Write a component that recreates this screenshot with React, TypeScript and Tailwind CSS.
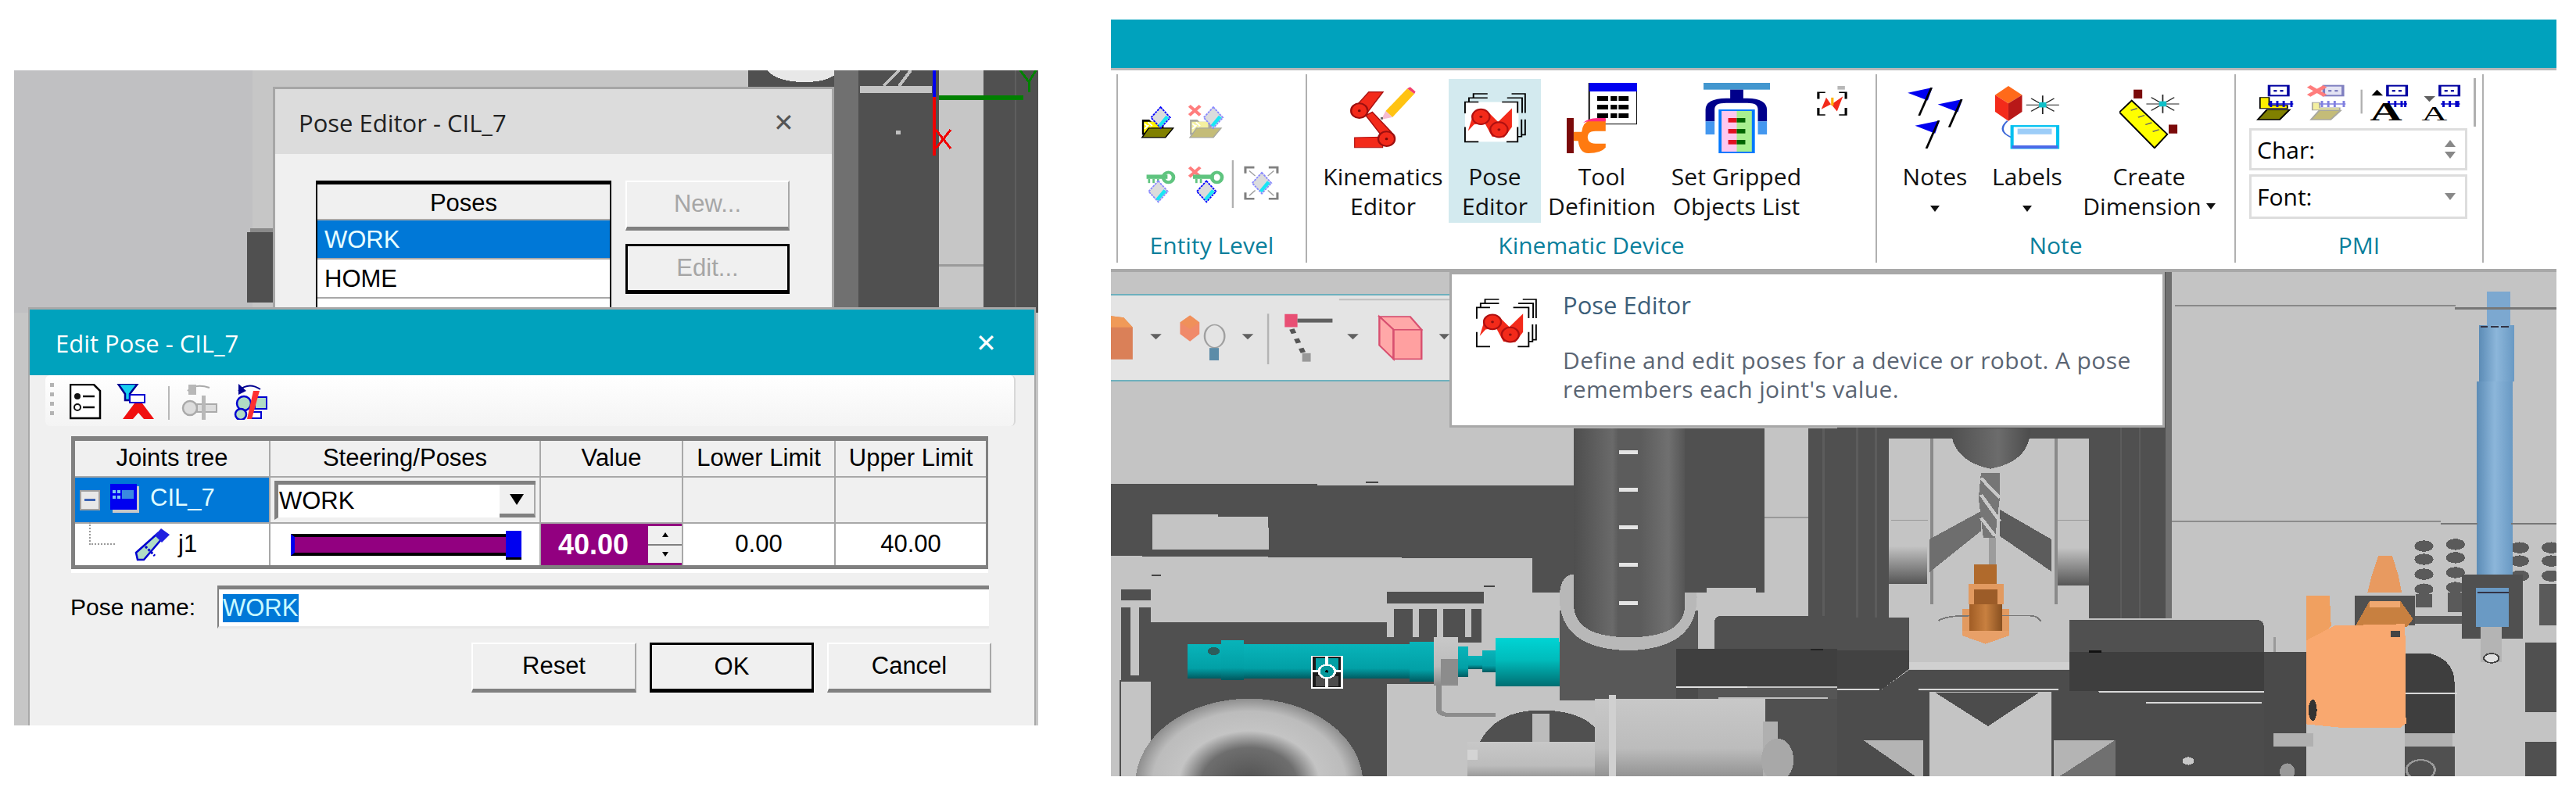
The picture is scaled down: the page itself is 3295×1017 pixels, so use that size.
import React from "react";

const sans = "font-['Liberation_Sans',Arial,sans-serif]";
const open = "font-['Open_Sans',sans-serif]";

function Diamond({ x, y, faded }: { x: number; y: number; faded?: boolean }) {
  const c = faded ? "#8888ff" : "#0000ff";
  return (
    <g>
      <polygon points={`${x},${y - 40} ${x + 32},${y} ${x},${y + 40} ${x - 32},${y}`} fill="#dcdcdc" stroke={c} strokeWidth="5" strokeDasharray="8 3" />
      <polygon points={`${x + 28},${y} ${x},${y + 36} ${x - 8},${y + 28} ${x + 18},${y - 8}`} fill="#19e6f5" />
    </g>
  );
}

function Folder({ x, faded }: { x: number; faded?: boolean }) {
  return (
    <g>
      <path d={`M${x},190 h24 l8,8 h40 v50 h-72 z`} fill={faded ? "#a8a8a0" : "#000"} />
      <rect x={x + 6} y={198} width={55} height={42} fill={faded ? "#f4f0a0" : "#fff000"} />
      <path d={`M${x + 8},205 l10,10 M${x + 20},200 l14,14 M${x + 8},225 l14,-14 M${x + 30},218 l-10,14`} stroke="#fff" strokeWidth="5" />
      <polygon points={`${x + 22},222 ${x + 104},222 ${x + 78},258 ${x},258`} fill={faded ? "#c4bc78" : "#808000"} stroke={faded ? "#a8a8a0" : "#000"} strokeWidth="4" />
    </g>
  );
}

function Cross({ x, y }: { x: number; y: number }) {
  return <path d={`M${x - 18},${y - 18} L${x + 18},${y + 18} M${x + 18},${y - 18} L${x - 18},${y + 18}`} stroke="#ff7d7d" strokeWidth="11" />;
}

function EntityIcons() {
  return (
    <svg className="block w-[180px] h-[134px]" viewBox="70 130 470 400" preserveAspectRatio="none">
      <Folder x={80} />
      <Diamond x={142} y={182} />
      <Folder x={240} faded />
      <Diamond x={318} y={182} faded />
      <Cross x={256} y={155} />
      <g fill="#5fc47f">
        <rect x="95" y="400" width="70" height="16" />
        <rect x="100" y="416" width="7" height="16" />
        <rect x="115" y="416" width="7" height="16" />
        <rect x="130" y="416" width="7" height="16" />
      </g>
      <ellipse cx="168" cy="410" rx="17" ry="19" fill="none" stroke="#5fc47f" strokeWidth="12" />
      <Diamond x={134} y={464} faded />
      <Cross x={256} y={390} />
      <g fill="#5fc47f">
        <rect x="250" y="400" width="70" height="16" />
        <rect x="258" y="416" width="7" height="16" />
        <rect x="273" y="416" width="7" height="16" />
      </g>
      <ellipse cx="330" cy="410" rx="17" ry="19" fill="none" stroke="#5fc47f" strokeWidth="12" />
      <Diamond x={295} y={464} />
      <rect x="380" y="345" width="6" height="182" fill="#b0b0b0" />
      <path d="M425,395 V372 H455 M532,395 V372 H503 M425,468 V492 H455 M532,468 V492 H503" fill="none" stroke="#808080" strokeWidth="8" />
      <path d="M438,385 L458,405 M520,385 L500,405 M438,480 L458,460 M520,480 L500,460" stroke="#a0a0a0" strokeWidth="4" />
      <Diamond x={480} y={432} faded />
    </svg>
  );
}

function KinematicsIcon() {
  return (
    <svg className="block w-[84px] h-[79px]" viewBox="775 65 222 237" preserveAspectRatio="none">
      <polygon points="790,260 885,258 885,298 790,298" fill="#f32a1a" stroke="#b01010" strokeWidth="3" />
      <polygon points="838,85 886,85 832,165 802,130" fill="#f32a1a" stroke="#a81010" strokeWidth="4" />
      <polygon points="828,175 850,162 915,240 885,258" fill="#f32a1a" stroke="#a81010" strokeWidth="4" />
      <circle cx="806" cy="157" r="28" fill="#f32a1a" stroke="#9c0f0f" strokeWidth="6" />
      <circle cx="806" cy="157" r="5" fill="#7a0a0a" />
      <circle cx="898" cy="265" r="28" fill="#f32a1a" stroke="#9c0f0f" strokeWidth="6" />
      <circle cx="898" cy="265" r="5" fill="#7a0a0a" />
      <polygon points="895,158 968,72 992,92 918,182" fill="#ffc312" />
      <polygon points="968,72 978,66 996,84 992,92" fill="#f2406f" />
      <polygon points="895,158 918,182 880,190" fill="#f5bcd0" />
      <rect x="878" y="182" width="8" height="8" fill="#666" />
    </svg>
  );
}

function PoseIcon({ w = "w-[80px]", h = "h-[65px]" }: { w?: string; h?: string }) {
  return (
    <svg className={`block shrink-0 ${w} ${h}`} viewBox="1155 90 208 197" preserveAspectRatio="none">
      <rect x="1160" y="128" width="178" height="154" fill="#fff" />
      <polygon points="1170,240 1190,165 1240,170 1270,205 1316,152 1316,225 1290,265 1250,262 1225,208 1190,215" fill="#f32a1a" />
      <circle cx="1213" cy="185" r="29" fill="#f32a1a" stroke="#b01010" strokeWidth="6" />
      <circle cx="1213" cy="185" r="5" fill="#901010" />
      <circle cx="1273" cy="235" r="29" fill="#f32a1a" stroke="#b01010" strokeWidth="6" />
      <circle cx="1273" cy="235" r="5" fill="#901010" />
      <path d="M1160,172 V128 H1205 M1173,128 V112 H1235 M1188,112 V96 H1235 M1283,128 H1335 V170 M1300,112 H1350 V170 M1315,96 H1360 V170 M1160,225 V282 H1205 M1298,282 H1335 V225 M1335,262 H1348 V195 M1348,255 H1360 V195" fill="none" stroke="#000" strokeWidth="5" />
    </svg>
  );
}

function ToolIcon() {
  return (
    <svg className="block w-[90px] h-[90px]" viewBox="932 297 141 270" preserveAspectRatio="none">
      <rect x="977" y="297" width="96" height="158" fill="#fff" stroke="#000" strokeWidth="3" />
      <rect x="977" y="297" width="96" height="33" fill="#0000f0" />
      <g fill="#000">
        {[348, 381, 414].map((y) => (
          <g key={y}>
            <rect x="993" y={y} width="22" height="18" />
            <rect x="1020" y={y} width="13" height="18" />
            <rect x="1036" y={y} width="20" height="18" />
          </g>
        ))}
      </g>
      <rect x="932" y="432" width="14" height="135" fill="#7b0a0a" />
      <path d="M946,485 H962 Q965,435 992,435 H1010 V482 H990 Q974,482 974,505 Q974,530 990,530 H1010 V545 Q1000,567 975,567 Q958,567 955,520 H946 Z" fill="#ff7a10" />
      <path d="M965,450 Q975,432 995,432 H1010 V445 H975 Z" fill="#ff2a80" />
    </svg>
  );
}

function GrippedIcon() {
  return (
    <svg className="block w-[85px] h-[90px]" viewBox="1205 297 132 270" preserveAspectRatio="none">
      <rect x="1205" y="297" width="132" height="26" fill="#4397cf" />
      <rect x="1258" y="323" width="26" height="35" fill="#00008b" />
      <path d="M1218,445 V400 Q1218,365 1250,365 H1292 Q1322,365 1322,400 V445" fill="none" stroke="#00008b" strokeWidth="18" />
      <path d="M1218,445 V495 M1322,445 V495" stroke="#4397ef" strokeWidth="18" />
      <rect x="1238" y="402" width="66" height="162" fill="#a8f090" stroke="#0078ff" strokeWidth="6" />
      <rect x="1241" y="405" width="30" height="156" fill="#ffc8f0" />
      {[432, 474, 516].map((y) => (
        <g key={y}>
          <rect x="1254" y={y} width="17" height="17" fill="#e01020" />
          <rect x="1271" y={y} width="17" height="17" fill="#006400" />
        </g>
      ))}
    </svg>
  );
}

function SmallPoseIcon() {
  return (
    <svg className="block w-[39px] h-[38px]" viewBox="1433 300 62 115" preserveAspectRatio="none">
      <rect x="1475" y="300" width="15" height="14" fill="#b8b8b8" />
      <path d="M1436,350 V325 H1450 M1478,325 H1492 V350 M1436,385 V412 H1450 M1478,412 H1492 V385" fill="none" stroke="#000" strokeWidth="5" />
      <polygon points="1442,390 1452,345 1462,372 1486,340 1474,398 1462,370" fill="#f32a1a" />
      <rect x="1462" y="345" width="5" height="30" fill="#ffb000" />
    </svg>
  );
}

function Flag({ x, y }: { x: number; y: number }) {
  return (
    <g>
      <polygon points={`${x},${y + 20} ${x + 54},${y} ${x + 44},${y + 50}`} fill="#0000f0" />
      <path d={`M${x + 52},${y} L${x + 25},${y + 108}`} stroke="#000" strokeWidth="5" />
    </g>
  );
}

function NotesIcon() {
  return (
    <svg className="block w-[73px] h-[78px]" viewBox="100 315 125 235" preserveAspectRatio="none">
      <Flag x={102} y={315} />
      <Flag x={168} y={360} />
      <Flag x={118} y={442} />
    </svg>
  );
}

function Star({ x, y, r }: { x: number; y: number; r: number }) {
  return (
    <g>
      <path d={`M${x},${y - r} V${y + r} M${x - r},${y} H${x + r} M${x - r * 0.7},${y - r * 0.7} L${x + r * 0.7},${y + r * 0.7} M${x + r * 0.7},${y - r * 0.7} L${x - r * 0.7},${y + r * 0.7}`} stroke="#222" strokeWidth="3" />
      <rect x={x - 8} y={y - 10} width="16" height="20" fill="#10c0c8" />
    </g>
  );
}

function LabelsIcon() {
  return (
    <svg className="block w-[83px] h-[81px]" viewBox="293 305 142 245" preserveAspectRatio="none">
      <polygon points="322,305 352,340 322,372 293,340" fill="#ff6a1a" />
      <polygon points="293,340 322,372 322,440 293,405" fill="#f32a1a" />
      <polygon points="352,340 352,405 322,440 322,372" fill="#b81818" />
      <path d="M320,440 Q295,480 330,505" fill="none" stroke="#3d68d8" strokeWidth="4" />
      <Star x={397} y={378} r={36} />
      <rect x="330" y="460" width="100" height="85" fill="#fff" stroke="#00c0f0" strokeWidth="7" />
      <rect x="342" y="470" width="75" height="22" fill="#9ccdf8" />
      <rect x="330" y="535" width="100" height="12" fill="#4a6ae8" />
    </svg>
  );
}

function DimensionIcon() {
  return (
    <svg className="block w-[77px] h-[78px]" viewBox="565 315 132 235" preserveAspectRatio="none">
      <rect x="596" y="323" width="19" height="34" fill="#7b0a0a" />
      <rect x="673" y="458" width="19" height="34" fill="#7b0a0a" />
      <polygon points="592,365 670,495 642,548 565,410" fill="#ffff00" stroke="#000" strokeWidth="4" />
      <path d="M590,403 L604,395 M606,430 L620,422 M622,458 L636,450 M638,485 L652,477" stroke="#666" strokeWidth="4" />
      <Star x={660} y={378} r={36} />
    </svg>
  );
}

function PmiIcons() {
  const Top = ({ x, faded }: { x: number; faded?: boolean }) => (
    <g>
      <rect x={x} y={300} width="42" height="38" fill={faded ? "#e4e4f4" : "#fff"} stroke={faded ? "#8080c0" : "#0000a0"} strokeWidth="6" />
      <rect x={x + 10} y={316} width="7" height="7" fill={faded ? "#8080c0" : "#0000a0"} />
      <rect x={x + 24} y={316} width="7" height="7" fill={faded ? "#8080c0" : "#0000a0"} />
    </g>
  );
  const Ruler = ({ x, w, faded }: { x: number; w: number; faded?: boolean }) => (
    <path d={`M${x},370 H${x + w} M${x + 6},358 V382 M${x + 20},358 V382 M${x + 34},358 V382 M${x + w - 4},358 V382`} stroke={faded ? "#8080e0" : "#0000c8"} strokeWidth="5" />
  );
  return (
    <svg className="block w-[265px] h-[56px]" viewBox="865 295 455 168" preserveAspectRatio="none">
      <Top x={895} />
      <path d="M875,345 h20 v30 h40 v12 h-60 z" fill="#fff000" stroke="#000" strokeWidth="3" />
      <polygon points="890,392 940,392 918,430 870,430" fill="#808000" stroke="#000" strokeWidth="4" />
      <Ruler x={893} w={55} />
      <Top x={1015} faded />
      <Cross x={1000} y={320} />
      <path d="M990,365 h16 v20 h44 v8 h-60 z" fill="#f4f0a0" stroke="#a8a8a0" strokeWidth="3" />
      <polygon points="1005,395 1052,395 1030,430 987,430" fill="#c4bc78" stroke="#a8a8a0" strokeWidth="4" />
      <Ruler x={1005} w={58} faded />
      <rect x="1096" y="315" width="4" height="92" fill="#b0b0b0" />
      <polygon points="1132,315 1145,338 1120,338" fill="#000" />
      <Top x={1155} />
      <Ruler x={1152} w={46} />
      <text x="1152" y="432" textAnchor="middle" fontSize="98" fontFamily="Liberation Serif" fontWeight="700" fill="#000">A</text>
      <polygon points="1235,340 1260,340 1247,362" fill="#606060" />
      <Top x={1270} />
      <Ruler x={1272} w={42} />
      <text x="1258" y="432" textAnchor="middle" fontSize="78" fontFamily="Liberation Serif" fill="#000">A</text>
    </svg>
  );
}

function BigButton({ icon, lines, width, active }: { icon: React.ReactNode; lines: React.ReactNode[]; width: string; active?: boolean }) {
  return (
    <div className={`flex flex-col items-center h-[184px] ${width} ${active ? "bg-[#d3eaef]" : ""}`}>
      <div className="h-[99px] flex items-center justify-center">{icon}</div>
      <div className={`pt-[7px] ${open} text-[30px] leading-[38px] tracking-[0.1px] text-[#111] text-center whitespace-nowrap`}>
        {lines.map((l, i) => (
          <div key={i} className="h-[38px]">{l}</div>
        ))}
      </div>
    </div>
  );
}

const Arrow = () => <span className="inline-block w-0 h-0 border-x-[6px] border-x-transparent border-t-[8px] border-t-[#111] align-middle" />;

function Group({ label, width, children }: { label: string; width: string; children: React.ReactNode }) {
  return (
    <div className={`flex flex-col h-[241px] mt-[5px] border-l-2 border-[#b0b0b0] ${width}`}>
      <div className="flex-1 min-h-0 flex items-start">{children}</div>
      <div className={`h-[46px] flex items-center justify-center ${open} text-[30px] text-[#0a7f9c]`}>{label}</div>
    </div>
  );
}

function Spin({ char }: { char?: boolean }) {
  return (
    <div className={`w-[279px] border-[3px] border-[#dddddd] flex items-center justify-between pl-[7px] pr-[12px] ${open} text-[30px] text-black ${char ? "h-[54px]" : "h-[57px] mt-[5px]"}`}>
      <span>{char ? "Char:" : "Font:"}</span>
      <span className="flex flex-col gap-[6px]">
        {char && <span className="w-0 h-0 border-x-[7px] border-x-transparent border-b-[9px] border-b-[#888]" />}
        <span className="w-0 h-0 border-x-[7px] border-x-transparent border-t-[9px] border-t-[#888]" />
      </span>
    </div>
  );
}

function Ribbon() {
  return (
    <div className="flex pl-[7px] h-[254px] bg-white">
      <Group label="Entity Level" width="w-[242px]">
        <div className="ml-[27px] mt-[38px]"><EntityIcons /></div>
      </Group>
      <Group label="Kinematic Device" width="w-[729px]">
        <div className="flex items-start mt-[6px] ml-[13px]">
          <BigButton width="w-[168px]" icon={<KinematicsIcon />} lines={["Kinematics", "Editor"]} />
          <BigButton width="w-[118px]" active icon={<PoseIcon />} lines={["Pose", "Editor"]} />
          <BigButton width="w-[156px]" icon={<ToolIcon />} lines={["Tool", "Definition"]} />
          <BigButton width="w-[188px]" icon={<GrippedIcon />} lines={["Set Gripped", "Objects List"]} />
          <div className="ml-[9px] mt-[9px]"><SmallPoseIcon /></div>
        </div>
      </Group>
      <Group label="Note" width="w-[459px]">
        <div className="flex items-start mt-[6px] ml-[14px]">
          <BigButton width="w-[120px]" icon={<NotesIcon />} lines={["Notes", <Arrow key="a" />]} />
          <BigButton width="w-[116px]" icon={<LabelsIcon />} lines={["Labels", <Arrow key="a" />]} />
          <BigButton width="w-[196px]" icon={<DimensionIcon />} lines={["Create", <span key="d" className="inline-flex items-center gap-[6px]">Dimension <Arrow /></span>]} />
        </div>
      </Group>
      <Group label="PMI" width="w-[317px]">
        <div className="flex flex-col ml-[17px] mt-[13px] relative">
          <div className="ml-[8px]"><PmiIcons /></div>
          <Spin char />
          <Spin />
          <div className="absolute left-[287px] top-[-8px] w-[3px] h-[62px] bg-[#b0b0b0]" />
        </div>
      </Group>
      <div className="mt-[5px] h-[241px] border-l-2 border-[#b0b0b0]" />
    </div>
  );
}

function Scene() {
  const L = "#c4c4c4";
  const D = "#505050";
  return (
    <svg className="block w-[1849px] h-[645px]" viewBox="1421 348 1849 645" preserveAspectRatio="none" shapeRendering="crispEdges">
      <defs>
        <linearGradient id="col" x1="0" x2="1" y1="0" y2="0">
          <stop offset="0" stopColor="#4e4e4e" /><stop offset="0.35" stopColor="#6a6a6a" /><stop offset="0.4" stopColor="#5c5c5c" /><stop offset="0.6" stopColor="#5c5c5c" /><stop offset="0.85" stopColor="#707070" /><stop offset="1" stopColor="#555" />
        </linearGradient>
        <linearGradient id="teal" x1="0" x2="0" y1="0" y2="1">
          <stop offset="0" stopColor="#08b4ba" /><stop offset="0.7" stopColor="#02a0a6" /><stop offset="1" stopColor="#005a60" />
        </linearGradient>
        <linearGradient id="teal2" x1="0" x2="0" y1="0" y2="1">
          <stop offset="0" stopColor="#00d4d4" /><stop offset="0.45" stopColor="#00bcbc" /><stop offset="1" stopColor="#006e72" />
        </linearGradient>
        <linearGradient id="metal" x1="0" x2="0" y1="0" y2="1">
          <stop offset="0" stopColor="#c8c8c8" /><stop offset="0.6" stopColor="#bcbcbc" /><stop offset="1" stopColor="#8c8c8c" />
        </linearGradient>
        <linearGradient id="shade" x1="0" x2="0" y1="0" y2="1">
          <stop offset="0" stopColor="#c4c4c4" /><stop offset="1" stopColor="#555" />
        </linearGradient>
        <linearGradient id="blue" x1="0" x2="1" y1="0" y2="0">
          <stop offset="0" stopColor="#5c8cb6" /><stop offset="0.5" stopColor="#8cb6da" /><stop offset="1" stopColor="#6a9ac4" />
        </linearGradient>
        <linearGradient id="cone" x1="0" x2="1" y1="0" y2="0">
          <stop offset="0" stopColor="#505050" /><stop offset="0.6" stopColor="#6c6c6c" /><stop offset="1" stopColor="#4c4c4c" />
        </linearGradient>
        <linearGradient id="copper" x1="0" x2="1" y1="0" y2="0">
          <stop offset="0" stopColor="#a05c24" /><stop offset="0.5" stopColor="#c88040" /><stop offset="1" stopColor="#885020" />
        </linearGradient>
        <radialGradient id="torus" cx="0.5" cy="0.5" r="0.5">
          <stop offset="0" stopColor="#505050" /><stop offset="0.42" stopColor="#6e6e6e" /><stop offset="0.62" stopColor="#c4c4c4" /><stop offset="0.85" stopColor="#bcbcbc" /><stop offset="1" stopColor="#8e8e8e" />
        </radialGradient>
      </defs>
      <rect x="1421" y="348" width="1849" height="645" fill={L} />
      <g transform="translate(1410 340) scale(0.606 0.4243)">
        <polygon points="18,657 453,657 453,662 995,662 995,985 908,985 908,882 583,880 18,875" fill={D} />
        <polygon points="106,750 245,750 245,756 350,756 352,855 106,855" fill={L} />
        <rect x="102" y="1075" width="498" height="480" fill={D} />
        <rect x="40" y="975" width="62" height="33" fill={D} />
        <rect x="40" y="1030" width="62" height="225" fill={D} />
        <rect x="60" y="1030" width="18" height="205" fill={L} />
        <rect x="36" y="1250" width="4" height="300" fill={D} />
        <rect x="600" y="982" width="205" height="35" fill={D} />
        <rect x="615" y="1035" width="186" height="100" fill={D} />
        {[655, 706, 765].map((x) => <rect key={x} x={x} y="1030" width="14" height="90" fill={L} />)}
        <rect x="600" y="1120" width="110" height="140" fill={D} />
        <rect x="556" y="650" width="26" height="5" fill="#444" />
        <rect x="104" y="930" width="20" height="5" fill="#444" />
        <rect x="805" y="964" width="24" height="5" fill="#444" />
        <ellipse cx="310" cy="1560" rx="240" ry="255" fill="url(#torus)" />
        <rect x="180" y="1140" width="520" height="105" fill="url(#teal)" />
        <rect x="250" y="1128" width="48" height="120" fill="url(#teal)" />
        <rect x="648" y="1134" width="52" height="120" fill="url(#teal)" />
        <ellipse cx="235" cy="1162" rx="13" ry="12" fill="#2c5c5c" />
        <path d="M710,1265 V1335 Q710,1355 740,1355 H830" fill="none" stroke="#8c8c8c" strokeWidth="12" />
        <rect x="700" y="1120" width="50" height="145" fill="url(#metal)" />
        <rect x="715" y="1185" width="35" height="75" fill="#8c8c8c" />
        <rect x="750" y="1148" width="22" height="92" fill="url(#teal)" />
        <rect x="772" y="1175" width="30" height="40" fill="url(#teal)" />
        <rect x="802" y="1160" width="28" height="65" fill="url(#teal)" />
        <polygon points="830,1122 963,1122 970,1170 995,1220 995,1268 830,1268" fill="url(#teal2)" />
        <rect x="442" y="1177" width="64" height="96" fill="#1a1a1a" stroke="#fff" strokeWidth="4" />
        <rect x="450" y="1182" width="48" height="38" fill="#03a0a4" />
        <rect x="450" y="1238" width="48" height="30" fill="#4c4c4c" />
        <path d="M440,1222 H508 M474,1175 V1275" stroke="#fff" strokeWidth="7" />
        <ellipse cx="474" cy="1223" rx="17" ry="20" fill="#05999c" stroke="#fff" strokeWidth="5" />
        <circle cx="474" cy="1223" r="4" fill="#000" />
        <rect x="965" y="1040" width="292" height="270" fill="#585858" />
        <path d="M965,1000 Q965,1155 1110,1160 Q1255,1155 1255,1000 Q1255,940 1230,930 H990 Q965,940 965,1000 Z" fill="#b8b8b8" />
        <path d="M995,490 H1230 V1020 Q1230,1120 1112,1120 Q995,1120 995,1020 Z" fill="url(#col)" />
        {[563, 676, 789, 902, 1018].map((y) => <rect key={y} x="1090" y={y - 6} width="40" height="12" fill="#e4e4e4" />)}
        <rect x="1230" y="490" width="168" height="495" fill={D} />
        <rect x="1275" y="970" width="105" height="90" fill={L} />
        <rect x="1398" y="756" width="92" height="6" fill="#999" />
        <rect x="1490" y="490" width="78" height="565" fill={D} />
        <rect x="1520" y="490" width="4" height="565" fill="#5c5c5c" />
        <path d="M1292,1155 V1075 Q1292,1055 1310,1055 H1568 V1155 Z" fill={D} />
        <rect x="1212" y="1155" width="356" height="112" fill="#3f3f3f" />
        <rect x="1495" y="1155" width="26" height="5" fill="#222" />
        <rect x="1212" y="1267" width="150" height="5" fill="#e0e0e0" />
        <rect x="1360" y="1274" width="208" height="5" fill="#e0e0e0" />
        <rect x="1212" y="1272" width="356" height="35" fill="#4a4a4a" opacity="0.9" />
        <rect x="1300" y="1300" width="232" height="6" fill="#c0c0c0" />
        <rect x="1380" y="1306" width="188" height="250" fill={D} />
        <path d="M795,1555 V1440 Q830,1340 925,1340 Q1010,1340 1045,1400 V1555 Z" fill={D} />
        <rect x="908" y="1350" width="36" height="90" fill="#bcbcbc" />
        <rect x="770" y="1435" width="270" height="120" fill="url(#metal)" />
        <rect x="770" y="1460" width="22" height="30" fill="#d4d4d4" />
        <rect x="1040" y="1305" width="360" height="250" fill="url(#metal)" />
        <rect x="1070" y="1295" width="14" height="260" fill="#d0d0d0" />
        <rect x="1395" y="1375" width="30" height="180" fill="#b0b0b0" />
        <ellipse cx="1425" cy="1490" rx="34" ry="65" fill="#a8a8a8" />
      </g>
      <g transform="translate(2350 340) scale(0.6028 0.4243)">
        <rect x="0" y="0" width="110" height="1060" fill={D} />
        <rect x="40" y="0" width="4" height="1060" fill="#5c5c5c" />
        <rect x="80" y="0" width="4" height="1060" fill="#5c5c5c" />
        <rect x="110" y="480" width="424" height="40" fill={D} />
        <rect x="534" y="0" width="176" height="1062" fill={D} />
        <rect x="600" y="0" width="4" height="1062" fill="#5c5c5c" />
        <rect x="640" y="0" width="4" height="1062" fill="#5c5c5c" />
        <rect x="696" y="0" width="14" height="1062" fill="#707070" />
        <rect x="110" y="845" width="80" height="115" fill="url(#shade)" />
        <rect x="462" y="850" width="72" height="115" fill="url(#shade)" />
        <rect x="114" y="765" width="78" height="4" fill="#999" />
        <rect x="466" y="765" width="68" height="4" fill="#999" />
        <rect x="198" y="520" width="6" height="500" fill="#8a8a8a" />
        <rect x="462" y="520" width="5" height="500" fill="#8a8a8a" />
        <path d="M240,490 H410 Q410,590 325,612 Q245,590 240,490 Z" fill="url(#cone)" />
        <polygon points="305,740 305,800 195,925 195,825" fill="#6e6e6e" />
        <polygon points="345,735 455,825 455,922 345,815" fill="#5c5c5c" />
        <polygon points="305,625 345,625 345,700 335,820 310,820 300,700" fill="#767676" />
        <path d="M305,640 L345,700 M305,690 L345,770 M305,760 L335,815" stroke="#c8c8c8" strokeWidth="8" />
        <rect x="322" y="820" width="14" height="100" fill="#9c9c9c" />
        <rect x="290" y="900" width="48" height="60" fill="#b06a2c" />
        <rect x="278" y="960" width="75" height="60" fill="#e29a60" />
        <rect x="290" y="975" width="50" height="50" fill="#9c5c28" />
        <rect x="265" y="1035" width="100" height="70" fill="#e29a60" />
        <rect x="280" y="1020" width="70" height="85" fill="url(#copper)" />
        <polygon points="265,1100 365,1100 365,1115 315,1140 265,1115" fill="#e8a068" />
        <path d="M215,1070 Q230,1055 280,1055 M350,1055 H410 Q425,1055 432,1072" fill="none" stroke="#777" strokeWidth="4" />
        <rect x="0" y="1060" width="153" height="100" fill={D} />
        <polygon points="0,1160 153,1160 153,1215 90,1282 0,1282" fill="#424242" />
        <rect x="153" y="1195" width="340" height="22" fill="#d0d0d0" />
        <polygon points="153,1218 492,1218 555,1285 990,1285 990,1555 0,1555 0,1282 90,1282" fill="#4c4c4c" />
        <path d="M492,1068 H890 Q905,1068 905,1085 V1165 H492 Z" fill={D} />
        <rect x="492" y="1165" width="500" height="118" fill="#3e3e3e" />
        <rect x="535" y="1160" width="26" height="6" fill="#111" />
        <rect x="0" y="1275" width="90" height="5" fill="#d8d8d8" />
        <rect x="172" y="1275" width="298" height="5" fill="#d8d8d8" />
        <rect x="555" y="1281" width="440" height="5" fill="#d8d8d8" />
        <rect x="655" y="1315" width="245" height="5" fill="#d8d8d8" />
        <rect x="195" y="1285" width="260" height="270" fill={L} />
        <polygon points="208,1287 428,1287 320,1388" fill="#4c4c4c" />
        <polygon points="55,1430 182,1430 182,1555" fill="#b4b4b4" />
        <polygon points="590,1430 460,1430 460,1555" fill="#b4b4b4" />
        <polygon points="455,1555 590,1430 590,1555" fill="#707070" />
        <ellipse cx="745" cy="1493" rx="12" ry="12" fill="#c8c8c8" />
        <rect x="905" y="1165" width="90" height="390" fill="#4a4a4a" />
        <rect x="925" y="1120" width="6" height="45" fill="#999" />
        <rect x="925" y="1410" width="380" height="40" fill="#b0b0b0" />
        <rect x="1010" y="1385" width="195" height="170" fill={L} />
        <rect x="1205" y="1450" width="105" height="105" fill={D} />
        <ellipse cx="1238" cy="1520" rx="30" ry="30" fill="none" stroke="#999" strokeWidth="5" />
        <ellipse cx="955" cy="1525" rx="16" ry="25" fill="#999" />
        <path d="M1205,1170 H1260 Q1310,1190 1310,1260 V1410 H1205 Z" fill="#3e3e3e" />
        <rect x="1205" y="1288" width="110" height="4" fill="#d8d8d8" />
        <g fill="#5a5a5a">
          {[[1245, 845], [1312, 840], [1245, 885], [1312, 880], [1245, 930], [1312, 925], [1245, 975], [1312, 970], [1448, 850], [1515, 850], [1448, 890], [1515, 890], [1448, 935], [1515, 935]].map(([x, y]) => (
            <ellipse key={`${x}-${y}`} cx={x} cy={y} rx="20" ry="17" />
          ))}
          <rect x="1228" y="990" width="34" height="40" />
          <rect x="1295" y="985" width="30" height="60" />
          <rect x="1225" y="1055" width="105" height="25" />
          <rect x="1490" y="960" width="37" height="125" />
        </g>
        <rect x="1098" y="995" width="128" height="90" fill={D} />
        <polygon points="1125,985 1135,930 1148,875 1178,875 1190,930 1198,985" fill="#e89a60" />
        <polygon points="1130,1010 1195,1010 1222,1065 1208,1090 1100,1085" fill="#c88040" />
        <rect x="1130" y="1010" width="65" height="20" fill="#f0a870" />
        <polygon points="995,995 1045,995 1048,1085 1020,1130 995,1130" fill="#f0a060" />
        <polygon points="995,1130 1055,1085 1205,1080 1207,1380 1195,1392 1065,1392 995,1382" fill="#f9a86f" />
        <ellipse cx="1009" cy="1340" rx="9" ry="32" fill="#333" />
        <rect x="1175" y="1100" width="20" height="20" fill="#444" />
        <rect x="1315" y="1125" width="145" height="430" fill={L} />
        <rect x="1460" y="1135" width="67" height="210" fill={D} />
        <rect x="1460" y="1345" width="67" height="90" fill={L} />
        <rect x="1460" y="1435" width="67" height="120" fill={D} />
        <rect x="1325" y="930" width="130" height="195" fill={D} />
        <rect x="1378" y="78" width="50" height="100" fill="#7ca8d0" />
        <rect x="1362" y="178" width="74" height="170" fill="url(#blue)" />
        <rect x="1357" y="348" width="76" height="582" fill="url(#blue)" />
        <path d="M1365,184 H1432" stroke="#334" strokeWidth="5" strokeDasharray="16 6" />
        <rect x="1355" y="970" width="70" height="120" fill="#6a9ac4" />
        <path d="M1358,985 H1425" stroke="#334" strokeWidth="4" />
        <rect x="1365" y="1090" width="45" height="105" fill="#b4b4b4" />
        <ellipse cx="1388" cy="1183" rx="16" ry="14" fill="#e0e0e0" stroke="#444" strokeWidth="4" />
        <rect x="1310" y="125" width="217" height="7" fill="#777" />
        <rect x="716" y="117" width="596" height="6" fill="#888" />
        <rect x="710" y="768" width="570" height="6" fill="#8c8c8c" />
        <rect x="1280" y="775" width="78" height="6" fill="#777" />
        <rect x="1430" y="775" width="97" height="6" fill="#777" />
      </g>
    </svg>
  );
}

function ViewToolbar() {
  return (
    <div className="absolute left-0 top-[28px] w-[433px] h-[112px] bg-[#e4e4e4] border-y-[2px] border-[#6db0bd]">
      <svg className="block w-full h-full" viewBox="18 87 715 259" preserveAspectRatio="none">
        <rect x="500" y="97" width="233" height="5" fill="#c0c0c0" />
        <polygon points="18,150 45,155 64,185 64,283 18,283" fill="#da8058" />
        <polygon points="18,150 45,155 64,185 18,185" fill="#f09a58" />
        <polygon points="101,205 125,205 113,222" fill="#606060" />
        <polygon points="185,148 205,170 205,205 185,228 164,205 164,170" fill="#f08a6a" />
        <polygon points="185,148 205,170 185,190 164,170" fill="#f0905a" />
        <ellipse cx="237" cy="212" rx="21" ry="35" fill="#e4e4e4" stroke="#a0a0a0" strokeWidth="4" />
        <rect x="226" y="248" width="20" height="38" fill="#5c8ca8" />
        <polygon points="295,205 319,205 307,222" fill="#606060" />
        <rect x="348" y="143" width="4" height="155" fill="#b4b4b4" />
        <rect x="385" y="144" width="27" height="40" fill="#e84f74" />
        <rect x="412" y="158" width="74" height="12" fill="#606060" />
        <path d="M400,190 L425,265" stroke="#555" strokeWidth="11" strokeDasharray="14 17" />
        <rect x="422" y="264" width="18" height="26" fill="#999" />
        <polygon points="517,205 541,205 529,222" fill="#606060" />
        <polygon points="585,152 650,152 674,192 615,192" fill="#ffa8a8" stroke="#d85070" strokeWidth="4" />
        <polygon points="585,152 615,192 615,282 585,240" fill="#ffa8a8" stroke="#d85070" strokeWidth="4" />
        <rect x="615" y="192" width="59" height="90" fill="#ffa0a0" stroke="#d85070" strokeWidth="4" />
        <polygon points="711,205 733,205 722,222" fill="#606060" />
      </svg>
    </div>
  );
}

function Tooltip() {
  return (
    <div className="absolute left-[433px] top-0 w-[915px] h-[199px] bg-white border-[3px] border-[#a8a8a8] flex pl-[30px] pt-[30px]">
      <PoseIcon w="w-[79px]" h="h-[64px]" />
      <div className={`ml-[33px] -mt-[10px] ${open}`}>
        <div className="text-[31px] leading-[38px] font-medium text-[#3d5f7a]">Pose Editor</div>
        <div className="mt-[33px] text-[30px] leading-[37px] tracking-[0.4px] text-[#5b6573] whitespace-nowrap">Define and edit poses for a device or robot. A pose</div>
        <div className="text-[30px] leading-[37px] tracking-[0.4px] text-[#5b6573] whitespace-nowrap">remembers each joint's value.</div>
      </div>
    </div>
  );
}

function WinButton({ label, isDefault, disabled, width }: { label: string; isDefault?: boolean; disabled?: boolean; width: string }) {
  const frame = isDefault
    ? "border-[3px] border-black border-b-[5px]"
    : "border-t-2 border-l-2 border-r-2 border-white border-r-[#a8a8a8] border-b-[5px] border-b-[#808080]";
  return (
    <div className={`${width} h-[64px] bg-[#f0f0f0] ${frame} flex items-center justify-center ${sans} text-[31px] ${disabled ? "text-[#a6a6a6]" : "text-black"}`}>
      {label}
    </div>
  );
}

function PoseEditorWindow() {
  return (
    <div className="absolute left-[331px] top-[21px] w-[718px] h-[300px] bg-[#f0f0f0] border-[3px] border-b-0 border-[#a6a6a6]">
      <div className={`h-[83px] bg-[#dcdcdc] flex items-center justify-between pl-[30px] pr-[48px] ${open} text-[31px] text-[#222]`}>
        <span className="mt-[3px]">Pose Editor - CIL_7</span>
        <span className="text-[#555] text-[32px]">✕</span>
      </div>
      <div className="flex gap-[18px] pl-[52px] pt-[34px]">
        <div className={`w-[378px] h-[400px] bg-white border-x-2 border-black border-t-[5px] ${sans} text-[31px] text-black`}>
          <div className="h-[46px] bg-[#f0f0f0] flex items-center justify-center border-b-2 border-[#a8a8a8] pt-[5px]">Poses</div>
          <div className="h-[50px] bg-[#0078d7] text-[#e8ffff] flex items-center pl-[9px] pt-[2px] border-b-2 border-[#a8a8a8]">WORK</div>
          <div className="h-[50px] bg-white flex items-center pl-[9px] pt-[2px] border-b-2 border-[#a8a8a8]">HOME</div>
        </div>
        <div className="flex flex-col gap-[17px]">
          <WinButton label="New..." disabled width="w-[210px]" />
          <WinButton label="Edit..." disabled isDefault width="w-[210px]" />
        </div>
      </div>
    </div>
  );
}

function EditToolbarIcons() {
  return (
    <svg className="block w-[254px] h-[46px]" viewBox="89 491 254 46" preserveAspectRatio="none">
      <path d="M90,492 H120 L128,500 V535 H90 Z" fill="#fff" stroke="#000" strokeWidth="2.5" />
      <circle cx="99" cy="507" r="4" fill="#111" />
      <circle cx="99" cy="521" r="4" fill="none" stroke="#111" strokeWidth="2" />
      <path d="M106,507 H121 M106,521 H121" stroke="#111" strokeWidth="2.5" />
      <polygon points="151,491 176,491 166,504 166,512 160,512 160,504" fill="#18d0f0" stroke="#000090" strokeWidth="2.5" />
      <rect x="166" y="505" width="19" height="10" fill="#fff" stroke="#0000d0" strokeWidth="2" />
      <polygon points="157,536 172,516 182,516 197,536 184,536 177,528 170,536" fill="#f01010" />
      <rect x="215" y="494" width="2" height="44" fill="#b8b8b8" />
      <path d="M240,500 Q250,490 268,496" fill="none" stroke="#aaa" strokeWidth="2" />
      <polygon points="241,492 251,492 251,505 241,505" fill="#b8b8b8" />
      <circle cx="243" cy="522" r="9" fill="#ddd" stroke="#aaa" strokeWidth="2.5" />
      <rect x="252" y="517" width="25" height="10" fill="#ddd" stroke="#aaa" strokeWidth="2" />
      <rect x="258" y="506" width="5" height="31" fill="#b8b8b8" />
      <path d="M305,500 Q318,488 333,498" fill="none" stroke="#000090" strokeWidth="2" />
      <polygon points="305,491 315,500 305,505" fill="#000090" />
      <circle cx="312" cy="516" r="9" fill="#b0dcc4" stroke="#0000d0" strokeWidth="2.5" />
      <circle cx="308" cy="530" r="7" fill="#b0dcc4" stroke="#0000d0" strokeWidth="2.5" />
      <rect x="326" y="508" width="15" height="15" fill="#b0dcc4" stroke="#0000d0" strokeWidth="2" />
      <rect x="320" y="527" width="14" height="8" fill="#fff" stroke="#0000d0" strokeWidth="2" />
      <polygon points="324,500 332,500 322,536 316,536" fill="#ff3030" />
    </svg>
  );
}

function TreeIcons({ kind }: { kind: "device" | "joint" }) {
  if (kind === "device") {
    return (
      <svg className="block w-[37px] h-[37px]" viewBox="0 0 37 37">
        <rect x="3" y="3" width="34" height="34" fill="#c8c8c8" />
        <rect x="0" y="0" width="34" height="33" fill="#0000f0" />
        <rect x="3" y="8" width="4" height="4" fill="#7cc8f0" />
        <rect x="9" y="8" width="4" height="4" fill="#7cc8f0" />
        <rect x="3" y="15" width="4" height="4" fill="#7cc8f0" />
        <rect x="9" y="15" width="4" height="4" fill="#7cc8f0" />
        <rect x="15" y="8" width="15" height="11" fill="#3a8ae0" />
      </svg>
    );
  }
  return (
    <svg className="block w-[46px] h-[46px]" viewBox="0 0 46 46">
      <polygon points="2,33 30,8 36,14 12,42 4,42" fill="#b0dcc4" stroke="#0000d0" strokeWidth="2.5" />
      <polygon points="34,2 45,10 35,20 26,11" fill="#2020e0" />
      <path d="M14,25 L26,37" stroke="#0000d0" strokeWidth="3" strokeDasharray="3 2" />
    </svg>
  );
}

function JointsTable() {
  const head = `bg-[#f0f0f0] flex items-center justify-center`;
  return (
    <div className={`ml-[53px] mt-[13px] w-[1173px] border-t-[6px] border-l-[5px] border-r-[3px] border-b-[5px] border-[#808080] bg-[#a8a8a8] grid grid-cols-[248px_344px_180px_193px_192px] grid-rows-[45px_57px_53px] gap-[2px] ${sans} text-[31px] text-black`}>
      <div className={head}>Joints tree</div>
      <div className={head}>Steering/Poses</div>
      <div className={head}>Value</div>
      <div className={head}>Lower Limit</div>
      <div className={head}>Upper Limit</div>

      <div className="bg-[#0078d7] flex items-center pl-[6px] text-[#dffcff]">
        <span className="w-[26px] h-[26px] bg-[#e8e8e8] border-2 border-[#a0a0a0] flex items-center justify-center">
          <span className="w-[14px] h-[3px] bg-[#3c64b4]" />
        </span>
        <span className="ml-[13px] -mt-[4px]"><TreeIcons kind="device" /></span>
        <span className="ml-[14px] -mt-[4px]">CIL_7</span>
      </div>
      <div className="bg-[#f0f0f0] px-[5px] pt-[4px]">
        <div className="h-[50px] bg-white border-t-[5px] border-l-[5px] border-[#808080] border-b-[3px] border-b-[#f0f0f0] flex items-center justify-between">
          <span className="pl-[1px]">WORK</span>
          <span className="w-[46px] h-full bg-[#f0f0f0] border-b-[5px] border-b-[#808080] border-r-2 border-r-[#a8a8a8] flex items-center justify-center">
            <span className="w-0 h-0 border-x-[9px] border-x-transparent border-t-[14px] border-t-black" />
          </span>
        </div>
      </div>
      <div className="bg-[#f0f0f0]" />
      <div className="bg-[#f0f0f0]" />
      <div className="bg-[#f0f0f0]" />

      <div className="bg-white relative flex items-center pl-[76px]">
        <TreeIcons kind="joint" />
        <span className="ml-[10px]">j1</span>
        <span className="absolute left-[18px] -top-[2px] h-[29px] w-[33px] border-l-2 border-b-2 border-dotted border-[#999]" />
      </div>
      <div className="bg-white flex items-center pl-[26px]">
        <div className="relative w-[295px] h-[28px] bg-[#920080] border-y-[4px] border-r-[3px] border-black border-l-[5px] border-l-[#0000f0]">
          <span className="absolute right-[-3px] top-[-8px] w-[20px] h-[37px] bg-[#0000f0] border-b-[3px] border-black" />
        </div>
      </div>
      <div className="bg-[#920080] flex items-center pl-[22px] pr-0 justify-between">
        <span className="text-white font-bold text-[36px]">40.00</span>
        <span className="flex flex-col w-[43px] h-[47px] bg-[#f0f0f0]">
          <span className="flex-1 flex items-center justify-center border-b-2 border-[#808080]"><span className="w-0 h-0 border-x-[4px] border-x-transparent border-b-[6px] border-b-black" /></span>
          <span className="flex-1 flex items-center justify-center"><span className="w-0 h-0 border-x-[4px] border-x-transparent border-t-[6px] border-t-black" /></span>
        </span>
      </div>
      <div className="bg-white flex items-center justify-center">0.00</div>
      <div className="bg-white flex items-center justify-center">40.00</div>
    </div>
  );
}

function EditPoseWindow() {
  return (
    <div className="absolute left-[18px] top-[303px] w-[1289px] h-[535px] bg-[#f0f0f0] border-t-[3px] border-x-[2px] border-[#a8a8a8] flex flex-col">
      <div className={`h-[84px] shrink-0 bg-[#00a2bd] flex items-center justify-between pl-[33px] pr-[48px] ${open} text-[31px] text-white`}>
        <span className="mt-[3px]">Edit Pose - CIL_7</span>
        <span className="text-[32px]">✕</span>
      </div>
      <div className="relative ml-[20px] w-[1241px] h-[65px] shrink-0 rounded-[6px] bg-gradient-to-b from-white to-[#f4f4f4] border-r-[2px] border-[#d8d8d8] flex items-start">
        <div className="ml-[6px] mt-[10px] flex flex-col gap-[7px]">
          {[0, 1, 2, 3].map((i) => <span key={i} className="block w-[5px] h-[5px] bg-[#b4b4b4]" />)}
        </div>
        <div className="ml-[20px] mt-[11px]"><EditToolbarIcons /></div>
      </div>
      <JointsTable />
      <div className="h-[5px] ml-[53px] w-[1173px] bg-white" />
      <div className={`flex items-center ml-[52px] mt-[16px] h-[55px] ${sans} text-[30px] text-black`}>
        <span className="w-[188px]">Pose name:</span>
        <div className="w-[987px] h-[55px] bg-white border-t-[5px] border-l-2 border-[#808080] border-b-[3px] border-b-[#e8e8e8] flex items-center pl-[5px]">
          <span className="bg-[#0078d7] text-[#c8f8ff] h-[36px] w-[97px] flex items-center text-[31px] leading-none overflow-hidden">WORK</span>
        </div>
      </div>
      <div className="flex justify-end gap-[17px] mt-[18px] pr-[55px] h-[64px] shrink-0">
        <WinButton label="Reset" width="w-[211px]" />
        <WinButton label="OK" isDefault width="w-[210px]" />
        <WinButton label="Cancel" width="w-[210px]" />
      </div>
    </div>
  );
}

function BackdropLeft() {
  return (
    <svg className="absolute inset-0 block w-[1310px] h-[838px]" viewBox="18 90 1310 838" preserveAspectRatio="none" shapeRendering="crispEdges">
      <rect x="18" y="90" width="1310" height="838" fill="#c6c6c6" />
      <rect x="18" y="90" width="305" height="310" fill="#c0c0c2" />
      <rect x="316" y="297" width="33" height="90" fill="#505050" />
      <rect x="320" y="292" width="30" height="5" fill="#8a8a8a" />
      <rect x="957" y="90" width="110" height="21" fill="#505050" />
      <path d="M981,90 H1074 Q1062,105 1030,105 Q995,105 981,90 Z" fill="#e8e8e8" />
      <rect x="1067" y="90" width="31" height="310" fill="#707070" />
      <rect x="1098" y="90" width="103" height="310" fill="#505050" />
      <rect x="1100" y="110" width="92" height="9" fill="#c4c4c4" />
      <path d="M1130,110 L1150,90 M1150,110 L1165,90" stroke="#c0c0c0" strokeWidth="4" />
      <rect x="1146" y="167" width="6" height="5" fill="#c0c0c0" />
      <rect x="1258" y="90" width="70" height="310" fill="#505050" />
      <rect x="1298" y="90" width="2" height="310" fill="#5e5e5e" />
      <rect x="1201" y="338" width="57" height="3" fill="#9a9a9a" />
      <rect x="1193" y="90" width="4" height="34" fill="#0000f0" />
      <rect x="1193" y="124" width="4" height="75" fill="#f00000" />
      <rect x="1201" y="122" width="108" height="6" fill="#008000" />
      <path d="M1197,166 L1216,190 M1216,166 L1197,190" stroke="#f00000" strokeWidth="3" />
      <path d="M1305,90 L1316,105 M1325,90 L1316,105 V118" stroke="#008000" strokeWidth="3" fill="none" />
    </svg>
  );
}

export default function App() {
  return (
    <div className="w-[3295px] h-[1017px] bg-white flex items-start overflow-hidden">
      <div className="relative ml-[18px] mt-[90px] w-[1310px] h-[838px] shrink-0 overflow-hidden">
        <BackdropLeft />
        <PoseEditorWindow />
        <EditPoseWindow />
      </div>
      <div className="ml-[93px] mt-[25px] w-[1849px] shrink-0 flex flex-col">
        <div className="h-[62px] bg-[#00a2bd] border-b-[3px] border-[#b8b8b8] box-content" />
        <Ribbon />
        <div className="relative h-[645px] border-t-[4px] border-[#a8a8a8] box-content">
          <Scene />
          <ViewToolbar />
          <Tooltip />
        </div>
      </div>
    </div>
  );
}
